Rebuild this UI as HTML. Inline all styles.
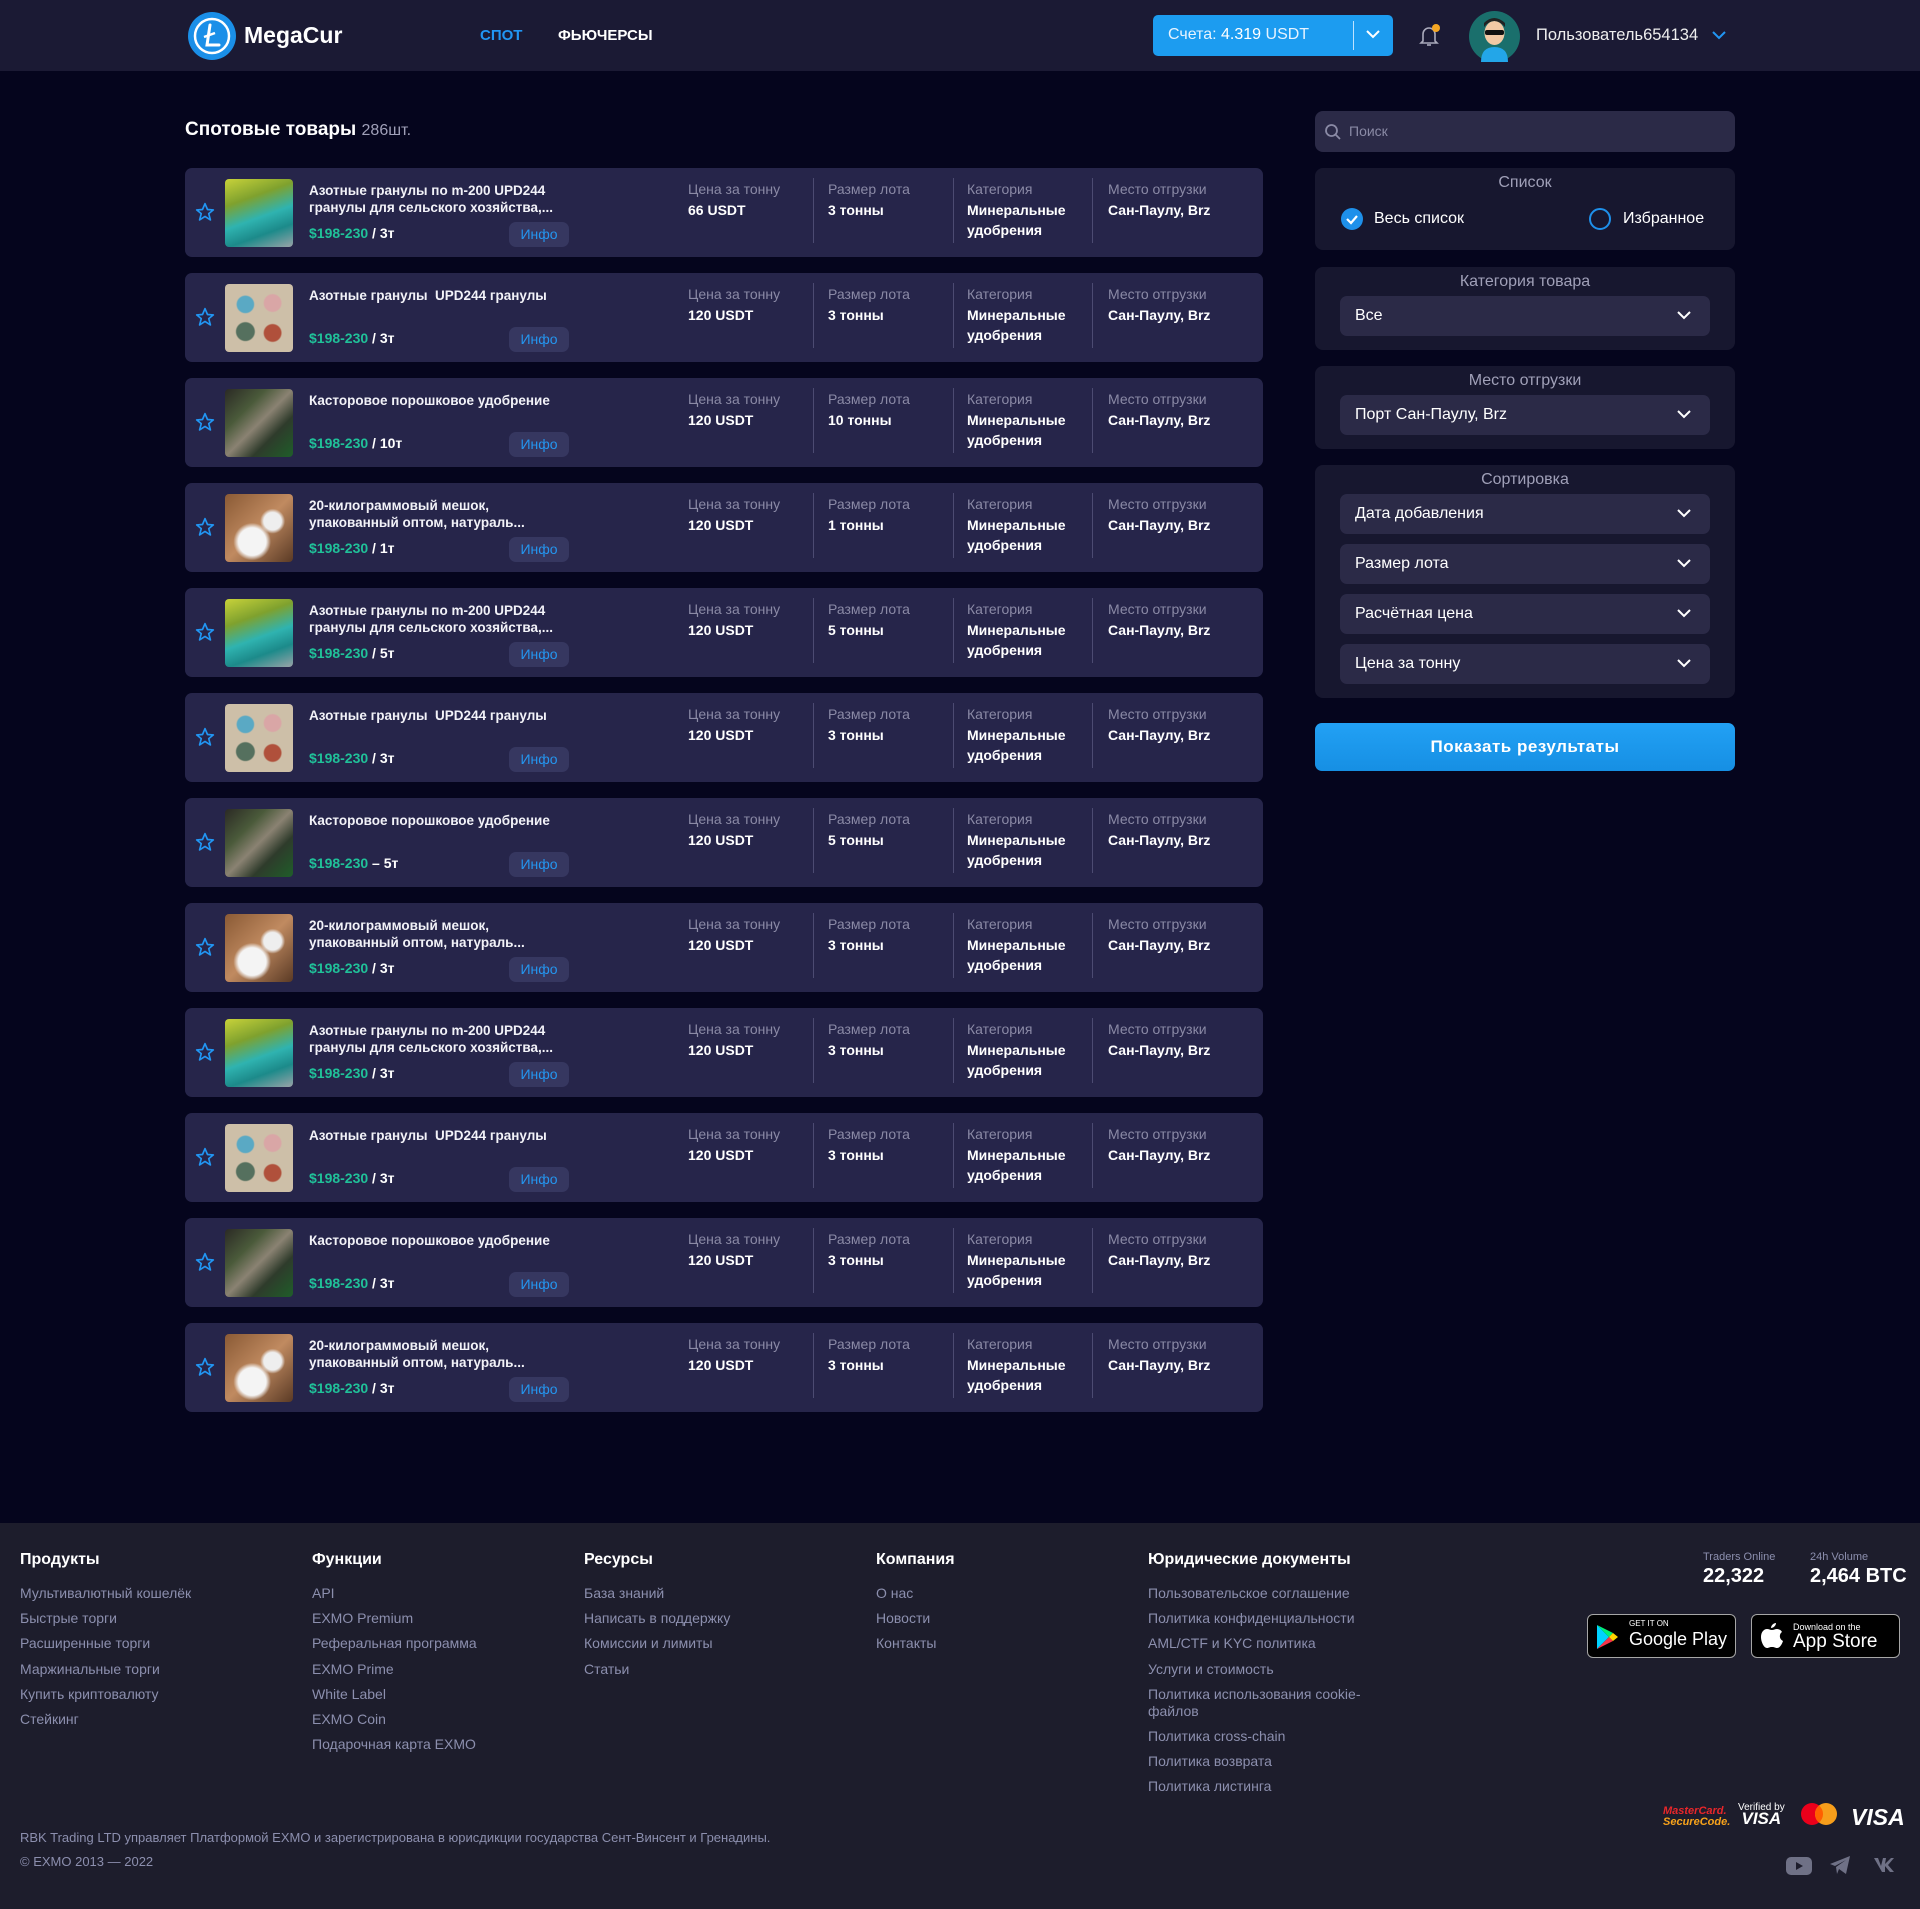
<!DOCTYPE html>
<html><head><meta charset="utf-8">
<style>
*{box-sizing:border-box;margin:0;padding:0}
body{width:1920px;height:1909px;background:#05051d;font-family:"Liberation Sans","Noto Sans CJK SC",sans-serif;position:relative;overflow:hidden;color:#fff}
.a{position:absolute}
.hdr{left:0;top:0;width:1920px;height:71px;background:#1b1a34}
.card{position:absolute;left:185px;width:1078px;height:89px;background:#26254a;border-radius:7px}
.card .st{position:absolute;left:10px;top:34px}
.card .im{position:absolute;left:40px;top:11px;width:68px;height:68px;border-radius:4px}
.card .t{position:absolute;left:124px;top:14px;font-size:13.5px;line-height:17px;font-weight:bold;color:#f2f2f8}
.card .pr{position:absolute;left:124px;top:57px;font-size:14px;font-weight:bold;color:#fff}
.card .pr b{color:#20c199}
.card .inf{position:absolute;left:324px;top:54px;width:60px;height:25px;background:#363760;border-radius:7px;color:#2496f0;font-size:14px;text-align:center;line-height:25px}
.card .c{position:absolute;top:11px;font-size:14px;line-height:20px}
.card .c span{color:#8b8aa6;display:block;margin-bottom:1px}
.card .c i{font-style:normal;font-weight:bold;color:#fff;display:block}
.card .d{position:absolute;top:10px;width:1px;height:65px;background:#4c4b72}
.g1{background:linear-gradient(160deg,#c8d23a 0%,#7fa12e 30%,#2fb3b0 55%,#1c8a8a 75%,#9aa3a8 100%)}
.g2{background:radial-gradient(circle at 30% 30%,#5aa9c4 0 12%,transparent 14%),radial-gradient(circle at 70% 28%,#d9a6a6 0 12%,transparent 14%),radial-gradient(circle at 30% 70%,#55705e 0 13%,transparent 15%),radial-gradient(circle at 70% 72%,#b0503b 0 12%,transparent 14%),#cdbfa8}
.g3{background:linear-gradient(135deg,#2b2a25 0%,#4a5a3a 30%,#8a8272 50%,#2e3b2b 70%,#1f5e2a 100%)}
.g4{background:radial-gradient(circle at 40% 70%,#f4f4f4 0 22%,transparent 30%),radial-gradient(circle at 70% 40%,#eee 0 14%,transparent 20%),linear-gradient(135deg,#8a5a35,#c08a60 50%,#5a3a25)}
.side{position:absolute;left:1315px;width:420px;border-radius:8px;background:#17172f}
.ttl{position:absolute;left:0;width:420px;text-align:center;color:#a0a0b8;font-size:16px}
.sel{position:absolute;left:25px;width:370px;height:40px;background:#2b2a47;border-radius:7px;font-size:16px;color:#fff;line-height:40px;padding-left:15px}
.sel svg{position:absolute;right:18px;top:14px}
.fh{position:absolute;top:1551px;font-size:16px;font-weight:bold;color:#fff}
.fl{position:absolute;font-size:14px;color:#8c8fae;line-height:25.2px}
</style></head><body>
<div class="a hdr"></div>
<svg class="a" style="left:187px;top:11px" width="50" height="50" viewBox="0 0 50 50"><circle cx="25" cy="25" r="24" fill="#1a8fe8"/><circle cx="25" cy="25" r="17" fill="none" stroke="#fff" stroke-width="2.5"/><path d="M23 14 L20 34 L32 34" fill="none" stroke="#fff" stroke-width="3" stroke-linecap="round"/><path d="M17 26 L28 22" stroke="#fff" stroke-width="2.5"/></svg>
<div class="a" style="left:244px;top:22px;font-size:23px;font-weight:bold">MegaCur</div>
<div class="a" style="left:480px;top:27px;font-size:15px;font-weight:bold;color:#2196f3">СПОТ</div>
<div class="a" style="left:558px;top:27px;font-size:15px;font-weight:bold">ФЬЮЧЕРСЫ</div>
<div class="a" style="left:1153px;top:15px;width:240px;height:41px;background:#1c9cf0;border-radius:5px"></div>
<div class="a" style="left:1168px;top:26px;font-size:16px;color:#e6f3ff">Счета: <span style="color:#fff">4.319</span> USDT</div>
<div class="a" style="left:1353px;top:21px;width:1px;height:29px;background:#bfe3ff"></div>
<svg class="a" style="left:1365px;top:29px" width="16" height="12"><path d="M2 2 L8 8 L14 2" fill="none" stroke="#fff" stroke-width="2"/></svg>
<svg class="a" style="left:1419px;top:24px" width="22" height="24" viewBox="0 0 22 24"><path d="M4 17 V10 a6 6 0 0 1 12 0 V17 L18 19 H2 Z" fill="none" stroke="#aab" stroke-width="1.6"/><path d="M8 21 h4" stroke="#aab" stroke-width="1.6"/><circle cx="17" cy="4" r="4" fill="#f5a623"/></svg>
<svg class="a" style="left:1469px;top:11px" width="51" height="51" viewBox="0 0 51 51"><circle cx="25.5" cy="25.5" r="25.5" fill="#1a6f6c"/><ellipse cx="25.5" cy="22" rx="10" ry="12" fill="#f2c9a5"/><path d="M15 16 Q25 4 36 16 L36 12 Q25 2 15 12Z" fill="#222"/><rect x="16" y="19" width="19" height="5" rx="2" fill="#111"/><path d="M12 51 Q12 36 25.5 36 Q39 36 39 51Z" fill="#23a6e8"/></svg>
<div class="a" style="left:1536px;top:26px;font-size:16.5px;color:#eee">Пользователь654134</div>
<svg class="a" style="left:1711px;top:30px" width="16" height="12"><path d="M2 2 L8 8 L14 2" fill="none" stroke="#2196f3" stroke-width="2"/></svg>

<div class="a" style="left:185px;top:119px;font-size:19px;font-weight:bold">Спотовые товары <span style="font-weight:normal;font-size:16px;color:#a0a0b8">286шт.</span></div>

<div class="card" style="top:168px"><svg class="st" width="20" height="20" viewBox="0 0 24 24"><path d="M12 2 L15 9 L22 9.5 L16.5 14 L18.5 21.5 L12 17.3 L5.5 21.5 L7.5 14 L2 9.5 L9 9Z" fill="none" stroke="#2196f3" stroke-width="2" stroke-linejoin="round"/></svg><div class="im g1"></div><div class="t">Азотные гранулы по m-200 UPD244<br>гранулы для сельского хозяйства,...</div><div class="pr"><b>$198-230</b> / 3т</div><div class="inf">Инфо</div><div class="c" style="left:503px"><span>Цена за тонну</span><i>66 USDT</i></div><div class="d" style="left:628px"></div><div class="c" style="left:643px"><span>Размер лота</span><i>3 тонны</i></div><div class="d" style="left:768px"></div><div class="c" style="left:782px"><span>Категория</span><i>Минеральные<br>удобрения</i></div><div class="d" style="left:907px"></div><div class="c" style="left:923px"><span>Место отгрузки</span><i>Сан-Паулу, Brz</i></div></div>

<div class="card" style="top:273px"><svg class="st" width="20" height="20" viewBox="0 0 24 24"><path d="M12 2 L15 9 L22 9.5 L16.5 14 L18.5 21.5 L12 17.3 L5.5 21.5 L7.5 14 L2 9.5 L9 9Z" fill="none" stroke="#2196f3" stroke-width="2" stroke-linejoin="round"/></svg><div class="im g2"></div><div class="t">Азотные гранулы&nbsp; UPD244 гранулы</div><div class="pr"><b>$198-230</b> / 3т</div><div class="inf">Инфо</div><div class="c" style="left:503px"><span>Цена за тонну</span><i>120 USDT</i></div><div class="d" style="left:628px"></div><div class="c" style="left:643px"><span>Размер лота</span><i>3 тонны</i></div><div class="d" style="left:768px"></div><div class="c" style="left:782px"><span>Категория</span><i>Минеральные<br>удобрения</i></div><div class="d" style="left:907px"></div><div class="c" style="left:923px"><span>Место отгрузки</span><i>Сан-Паулу, Brz</i></div></div>

<div class="card" style="top:378px"><svg class="st" width="20" height="20" viewBox="0 0 24 24"><path d="M12 2 L15 9 L22 9.5 L16.5 14 L18.5 21.5 L12 17.3 L5.5 21.5 L7.5 14 L2 9.5 L9 9Z" fill="none" stroke="#2196f3" stroke-width="2" stroke-linejoin="round"/></svg><div class="im g3"></div><div class="t">Касторовое порошковое удобрение</div><div class="pr"><b>$198-230</b> / 10т</div><div class="inf">Инфо</div><div class="c" style="left:503px"><span>Цена за тонну</span><i>120 USDT</i></div><div class="d" style="left:628px"></div><div class="c" style="left:643px"><span>Размер лота</span><i>10 тонны</i></div><div class="d" style="left:768px"></div><div class="c" style="left:782px"><span>Категория</span><i>Минеральные<br>удобрения</i></div><div class="d" style="left:907px"></div><div class="c" style="left:923px"><span>Место отгрузки</span><i>Сан-Паулу, Brz</i></div></div>

<div class="card" style="top:483px"><svg class="st" width="20" height="20" viewBox="0 0 24 24"><path d="M12 2 L15 9 L22 9.5 L16.5 14 L18.5 21.5 L12 17.3 L5.5 21.5 L7.5 14 L2 9.5 L9 9Z" fill="none" stroke="#2196f3" stroke-width="2" stroke-linejoin="round"/></svg><div class="im g4"></div><div class="t">20-килограммовый мешок,<br>упакованный оптом, натураль...</div><div class="pr"><b>$198-230</b> / 1т</div><div class="inf">Инфо</div><div class="c" style="left:503px"><span>Цена за тонну</span><i>120 USDT</i></div><div class="d" style="left:628px"></div><div class="c" style="left:643px"><span>Размер лота</span><i>1 тонны</i></div><div class="d" style="left:768px"></div><div class="c" style="left:782px"><span>Категория</span><i>Минеральные<br>удобрения</i></div><div class="d" style="left:907px"></div><div class="c" style="left:923px"><span>Место отгрузки</span><i>Сан-Паулу, Brz</i></div></div>

<div class="card" style="top:588px"><svg class="st" width="20" height="20" viewBox="0 0 24 24"><path d="M12 2 L15 9 L22 9.5 L16.5 14 L18.5 21.5 L12 17.3 L5.5 21.5 L7.5 14 L2 9.5 L9 9Z" fill="none" stroke="#2196f3" stroke-width="2" stroke-linejoin="round"/></svg><div class="im g1"></div><div class="t">Азотные гранулы по m-200 UPD244<br>гранулы для сельского хозяйства,...</div><div class="pr"><b>$198-230</b> / 5т</div><div class="inf">Инфо</div><div class="c" style="left:503px"><span>Цена за тонну</span><i>120 USDT</i></div><div class="d" style="left:628px"></div><div class="c" style="left:643px"><span>Размер лота</span><i>5 тонны</i></div><div class="d" style="left:768px"></div><div class="c" style="left:782px"><span>Категория</span><i>Минеральные<br>удобрения</i></div><div class="d" style="left:907px"></div><div class="c" style="left:923px"><span>Место отгрузки</span><i>Сан-Паулу, Brz</i></div></div>

<div class="card" style="top:693px"><svg class="st" width="20" height="20" viewBox="0 0 24 24"><path d="M12 2 L15 9 L22 9.5 L16.5 14 L18.5 21.5 L12 17.3 L5.5 21.5 L7.5 14 L2 9.5 L9 9Z" fill="none" stroke="#2196f3" stroke-width="2" stroke-linejoin="round"/></svg><div class="im g2"></div><div class="t">Азотные гранулы&nbsp; UPD244 гранулы</div><div class="pr"><b>$198-230</b> / 3т</div><div class="inf">Инфо</div><div class="c" style="left:503px"><span>Цена за тонну</span><i>120 USDT</i></div><div class="d" style="left:628px"></div><div class="c" style="left:643px"><span>Размер лота</span><i>3 тонны</i></div><div class="d" style="left:768px"></div><div class="c" style="left:782px"><span>Категория</span><i>Минеральные<br>удобрения</i></div><div class="d" style="left:907px"></div><div class="c" style="left:923px"><span>Место отгрузки</span><i>Сан-Паулу, Brz</i></div></div>

<div class="card" style="top:798px"><svg class="st" width="20" height="20" viewBox="0 0 24 24"><path d="M12 2 L15 9 L22 9.5 L16.5 14 L18.5 21.5 L12 17.3 L5.5 21.5 L7.5 14 L2 9.5 L9 9Z" fill="none" stroke="#2196f3" stroke-width="2" stroke-linejoin="round"/></svg><div class="im g3"></div><div class="t">Касторовое порошковое удобрение</div><div class="pr"><b>$198-230</b> – 5т</div><div class="inf">Инфо</div><div class="c" style="left:503px"><span>Цена за тонну</span><i>120 USDT</i></div><div class="d" style="left:628px"></div><div class="c" style="left:643px"><span>Размер лота</span><i>5 тонны</i></div><div class="d" style="left:768px"></div><div class="c" style="left:782px"><span>Категория</span><i>Минеральные<br>удобрения</i></div><div class="d" style="left:907px"></div><div class="c" style="left:923px"><span>Место отгрузки</span><i>Сан-Паулу, Brz</i></div></div>

<div class="card" style="top:903px"><svg class="st" width="20" height="20" viewBox="0 0 24 24"><path d="M12 2 L15 9 L22 9.5 L16.5 14 L18.5 21.5 L12 17.3 L5.5 21.5 L7.5 14 L2 9.5 L9 9Z" fill="none" stroke="#2196f3" stroke-width="2" stroke-linejoin="round"/></svg><div class="im g4"></div><div class="t">20-килограммовый мешок,<br>упакованный оптом, натураль...</div><div class="pr"><b>$198-230</b> / 3т</div><div class="inf">Инфо</div><div class="c" style="left:503px"><span>Цена за тонну</span><i>120 USDT</i></div><div class="d" style="left:628px"></div><div class="c" style="left:643px"><span>Размер лота</span><i>3 тонны</i></div><div class="d" style="left:768px"></div><div class="c" style="left:782px"><span>Категория</span><i>Минеральные<br>удобрения</i></div><div class="d" style="left:907px"></div><div class="c" style="left:923px"><span>Место отгрузки</span><i>Сан-Паулу, Brz</i></div></div>

<div class="card" style="top:1008px"><svg class="st" width="20" height="20" viewBox="0 0 24 24"><path d="M12 2 L15 9 L22 9.5 L16.5 14 L18.5 21.5 L12 17.3 L5.5 21.5 L7.5 14 L2 9.5 L9 9Z" fill="none" stroke="#2196f3" stroke-width="2" stroke-linejoin="round"/></svg><div class="im g1"></div><div class="t">Азотные гранулы по m-200 UPD244<br>гранулы для сельского хозяйства,...</div><div class="pr"><b>$198-230</b> / 3т</div><div class="inf">Инфо</div><div class="c" style="left:503px"><span>Цена за тонну</span><i>120 USDT</i></div><div class="d" style="left:628px"></div><div class="c" style="left:643px"><span>Размер лота</span><i>3 тонны</i></div><div class="d" style="left:768px"></div><div class="c" style="left:782px"><span>Категория</span><i>Минеральные<br>удобрения</i></div><div class="d" style="left:907px"></div><div class="c" style="left:923px"><span>Место отгрузки</span><i>Сан-Паулу, Brz</i></div></div>

<div class="card" style="top:1113px"><svg class="st" width="20" height="20" viewBox="0 0 24 24"><path d="M12 2 L15 9 L22 9.5 L16.5 14 L18.5 21.5 L12 17.3 L5.5 21.5 L7.5 14 L2 9.5 L9 9Z" fill="none" stroke="#2196f3" stroke-width="2" stroke-linejoin="round"/></svg><div class="im g2"></div><div class="t">Азотные гранулы&nbsp; UPD244 гранулы</div><div class="pr"><b>$198-230</b> / 3т</div><div class="inf">Инфо</div><div class="c" style="left:503px"><span>Цена за тонну</span><i>120 USDT</i></div><div class="d" style="left:628px"></div><div class="c" style="left:643px"><span>Размер лота</span><i>3 тонны</i></div><div class="d" style="left:768px"></div><div class="c" style="left:782px"><span>Категория</span><i>Минеральные<br>удобрения</i></div><div class="d" style="left:907px"></div><div class="c" style="left:923px"><span>Место отгрузки</span><i>Сан-Паулу, Brz</i></div></div>

<div class="card" style="top:1218px"><svg class="st" width="20" height="20" viewBox="0 0 24 24"><path d="M12 2 L15 9 L22 9.5 L16.5 14 L18.5 21.5 L12 17.3 L5.5 21.5 L7.5 14 L2 9.5 L9 9Z" fill="none" stroke="#2196f3" stroke-width="2" stroke-linejoin="round"/></svg><div class="im g3"></div><div class="t">Касторовое порошковое удобрение</div><div class="pr"><b>$198-230</b> / 3т</div><div class="inf">Инфо</div><div class="c" style="left:503px"><span>Цена за тонну</span><i>120 USDT</i></div><div class="d" style="left:628px"></div><div class="c" style="left:643px"><span>Размер лота</span><i>3 тонны</i></div><div class="d" style="left:768px"></div><div class="c" style="left:782px"><span>Категория</span><i>Минеральные<br>удобрения</i></div><div class="d" style="left:907px"></div><div class="c" style="left:923px"><span>Место отгрузки</span><i>Сан-Паулу, Brz</i></div></div>

<div class="card" style="top:1323px"><svg class="st" width="20" height="20" viewBox="0 0 24 24"><path d="M12 2 L15 9 L22 9.5 L16.5 14 L18.5 21.5 L12 17.3 L5.5 21.5 L7.5 14 L2 9.5 L9 9Z" fill="none" stroke="#2196f3" stroke-width="2" stroke-linejoin="round"/></svg><div class="im g4"></div><div class="t">20-килограммовый мешок,<br>упакованный оптом, натураль...</div><div class="pr"><b>$198-230</b> / 3т</div><div class="inf">Инфо</div><div class="c" style="left:503px"><span>Цена за тонну</span><i>120 USDT</i></div><div class="d" style="left:628px"></div><div class="c" style="left:643px"><span>Размер лота</span><i>3 тонны</i></div><div class="d" style="left:768px"></div><div class="c" style="left:782px"><span>Категория</span><i>Минеральные<br>удобрения</i></div><div class="d" style="left:907px"></div><div class="c" style="left:923px"><span>Место отгрузки</span><i>Сан-Паулу, Brz</i></div></div>

<div class="a" style="left:1315px;top:111px;width:420px;height:41px;background:#2b2a47;border-radius:8px"></div>
<svg class="a" style="left:1324px;top:123px" width="18" height="18"><circle cx="7.5" cy="7.5" r="5.5" fill="none" stroke="#8a8aa5" stroke-width="1.8"/><path d="M11.5 11.5 L16 16" stroke="#8a8aa5" stroke-width="1.8"/></svg>
<div class="a" style="left:1349px;top:123px;font-size:14px;color:#8a8aa5">Поиск</div>

<div class="side" style="top:168px;height:82px"><div class="ttl" style="top:6px">Список</div>
<svg class="a" style="left:26px;top:40px" width="22" height="22"><circle cx="11" cy="11" r="11" fill="#1e90ea"/><path d="M6 11 L10 15 L16 8" fill="none" stroke="#fff" stroke-width="2.2"/></svg>
<div class="a" style="left:59px;top:42px;font-size:16px">Весь список</div>
<svg class="a" style="left:274px;top:40px" width="22" height="22"><circle cx="11" cy="11" r="10" fill="none" stroke="#1e90ea" stroke-width="2"/></svg>
<div class="a" style="left:308px;top:42px;font-size:16px">Избранное</div></div>

<div class="side" style="top:267px;height:83px"><div class="ttl" style="top:6px">Категория товара</div><div class="sel" style="top:29px">Все<svg width="16" height="11"><path d="M2 2 L8 8 L14 2" fill="none" stroke="#fff" stroke-width="2"/></svg></div></div>
<div class="side" style="top:366px;height:83px"><div class="ttl" style="top:6px">Место отгрузки</div><div class="sel" style="top:29px">Порт Сан-Паулу, Brz<svg width="16" height="11"><path d="M2 2 L8 8 L14 2" fill="none" stroke="#fff" stroke-width="2"/></svg></div></div>
<div class="side" style="top:465px;height:233px"><div class="ttl" style="top:6px">Сортировка</div>
<div class="sel" style="top:29px">Дата добавления<svg width="16" height="11"><path d="M2 2 L8 8 L14 2" fill="none" stroke="#fff" stroke-width="2"/></svg></div>
<div class="sel" style="top:79px">Размер лота<svg width="16" height="11"><path d="M2 2 L8 8 L14 2" fill="none" stroke="#fff" stroke-width="2"/></svg></div>
<div class="sel" style="top:129px">Расчётная цена<svg width="16" height="11"><path d="M2 2 L8 8 L14 2" fill="none" stroke="#fff" stroke-width="2"/></svg></div>
<div class="sel" style="top:179px">Цена за тонну<svg width="16" height="11"><path d="M2 2 L8 8 L14 2" fill="none" stroke="#fff" stroke-width="2"/></svg></div></div>
<div class="a" style="left:1315px;top:723px;width:420px;height:48px;border-radius:7px;background:linear-gradient(180deg,#22a1f5,#168fe3);text-align:center;line-height:48px;font-size:17px;font-weight:bold;letter-spacing:.5px">Показать результаты</div>

<div class="a" style="left:0;top:1523px;width:1920px;height:386px;background:#1d1d2c"></div>
<div class="fh" style="left:20px">Продукты</div>
<div class="fh" style="left:312px">Функции</div>
<div class="fh" style="left:584px">Ресурсы</div>
<div class="fh" style="left:876px">Компания</div>
<div class="fh" style="left:1148px">Юридические документы</div>
<div class="fl" style="left:20px;top:1581px">Мультивалютный кошелёк<br>Быстрые торги<br>Расширенные торги<br>Маржинальные торги<br>Купить криптовалюту<br>Стейкинг</div>
<div class="fl" style="left:312px;top:1581px">API<br>EXMO Premium<br>Реферальная программа<br>EXMO Prime<br>White Label<br>EXMO Coin<br>Подарочная карта EXMO</div>
<div class="fl" style="left:584px;top:1581px">База знаний<br>Написать в поддержку<br>Комиссии и лимиты<br>Статьи</div>
<div class="fl" style="left:876px;top:1581px">О нас<br>Новости<br>Контакты</div>
<div class="fl" style="left:1148px;top:1581px">Пользовательское соглашение<br>Политика конфиденциальности<br>AML/CTF и KYC политика<br>Услуги и стоимость<br><span style="display:block;line-height:17px;padding:4px 0">Политика использования cookie-<br>файлов</span>Политика cross-chain<br>Политика возврата<br>Политика листинга</div>
<div class="a" style="left:1703px;top:1551px;font-size:11px;color:#8c8fae">Traders Online</div>
<div class="a" style="left:1703px;top:1565px;font-size:20px;font-weight:bold">22,322</div>
<div class="a" style="left:1810px;top:1551px;font-size:11px;color:#8c8fae">24h Volume</div>
<div class="a" style="left:1810px;top:1565px;font-size:20px;font-weight:bold">2,464 BTC</div>
<div class="a" style="left:1587px;top:1614px;width:149px;height:44px;background:#000;border:1px solid #a6a6a6;border-radius:6px"></div>
<svg class="a" style="left:1596px;top:1624px" width="24" height="26"><path d="M1 1 L13 13 L1 25Z" fill="#00d2ff"/><path d="M1 1 L17 9 L13 13Z" fill="#00f076"/><path d="M1 25 L17 17 L13 13Z" fill="#f53349"/><path d="M17 9 L22 13 L17 17 L13 13Z" fill="#ffd400"/></svg>
<div class="a" style="left:1629px;top:1619px;font-size:8px">GET IT ON</div>
<div class="a" style="left:1629px;top:1629px;font-size:18px">Google Play</div>
<div class="a" style="left:1751px;top:1614px;width:149px;height:44px;background:#000;border:1px solid #a6a6a6;border-radius:6px"></div>
<svg class="a" style="left:1760px;top:1622px" width="24" height="28" viewBox="0 0 24 28"><path d="M16 1 C16 4 13 6 11 6 C11 3 14 1 16 1Z M12 8 C14 8 15 7 17 7 C19 7 21 8 22 10 C19 12 19 17 23 19 C22 22 20 26 17 26 C15 26 15 25 12 25 C9 25 9 26 7 26 C4 26 1 20 1 15 C1 10 4 7 7 7 C9 7 10 8 12 8Z" fill="#fff"/></svg>
<div class="a" style="left:1793px;top:1622px;font-size:9px">Download on the</div>
<div class="a" style="left:1793px;top:1631px;font-size:19px">App Store</div>
<div class="a" style="left:1663px;top:1806px;font-size:11px;font-weight:bold;font-style:italic;color:#e8262a;line-height:11px">MasterCard.<br><span style="color:#f7a21b">SecureCode.</span></div>
<div class="a" style="left:1738px;top:1802px;font-size:10px;line-height:11px;text-align:center">Verified by<br><b style="font-size:17px;font-style:italic">VISA</b></div>
<svg class="a" style="left:1800px;top:1802px" width="38" height="26"><circle cx="12" cy="12" r="11" fill="#eb001b"/><circle cx="26" cy="12" r="11" fill="#f79e1b"/><path d="M19 3.5 A11 11 0 0 1 19 20.5 A11 11 0 0 1 19 3.5Z" fill="#ff5f00"/></svg>
<div class="a" style="left:1851px;top:1804px;font-size:23px;font-weight:bold;font-style:italic">VISA</div>
<div class="a" style="left:20px;top:1830px;font-size:13px;color:#8c8fae">RBK Trading LTD управляет Платформой EXMO и зарегистрирована в юрисдикции государства Сент-Винсент и Гренадины.</div>
<div class="a" style="left:20px;top:1854px;font-size:13px;color:#8c8fae">© EXMO 2013 — 2022</div>
<svg class="a" style="left:1786px;top:1856px" width="26" height="20"><rect x="0" y="1" width="26" height="18" rx="5" fill="#6f7186"/><path d="M10 6 L17 10 L10 14Z" fill="#1d1d2c"/></svg>
<svg class="a" style="left:1829px;top:1855px" width="22" height="20"><path d="M1 9 L21 1 L17 19 L10 14 L8 19 L7 12 L17 5 L6 11Z" fill="#6f7186"/></svg>
<svg class="a" style="left:1873px;top:1857px" width="22" height="16"><path d="M1 1 H5 L8 9 L10 1 H13 L12 7 L18 1 H21 L15 8 L21 15 H17 L12 9 V15 H9 Z" fill="#6f7186"/></svg>
</body></html>
